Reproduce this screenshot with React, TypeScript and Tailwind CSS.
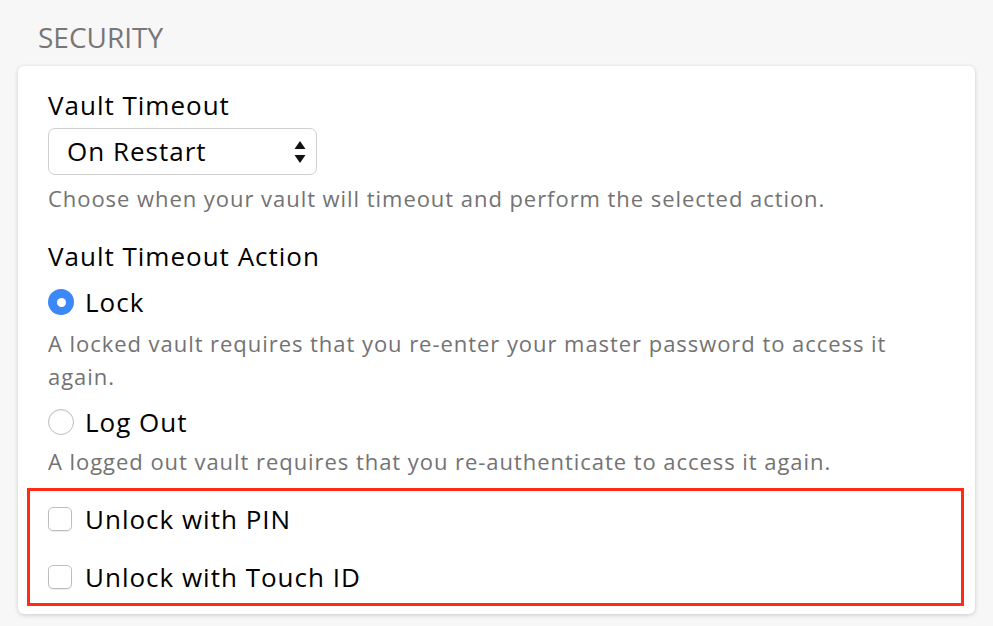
const Radio = ({ checked }: { checked: boolean }) =>
  checked ? (
    <span className="flex h-[26px] w-[26px] shrink-0 items-center justify-center rounded-full bg-[#3b88f6]">
      <span className="h-[9px] w-[9px] rounded-full bg-white" />
    </span>
  ) : (
    <span className="h-[26px] w-[26px] shrink-0 rounded-full border border-[#bdbdbd] bg-white shadow-[inset_0_1px_1px_rgba(0,0,0,0.06)]" />
  );

const Checkbox = () => (
  <span className="h-[24px] w-[24px] shrink-0 rounded-[5px] border border-[#bdbdbd] bg-white shadow-[0_1px_1px_rgba(0,0,0,0.08)]" />
);

const App = () => {
  return (
    <div
      className="min-h-[626px] bg-[#f7f7f7] pt-[19px]"
      style={{ fontFamily: '"Open Sans", "Liberation Sans", sans-serif' }}
    >
      <h2 className="ml-[38px] text-[28px] leading-[36px] text-[#777777]">SECURITY</h2>

      <div className="mx-[18px] mt-[11px] rounded-[6px] bg-white px-[30px] pt-[22px] pb-[8px] shadow-[0_1px_4px_rgba(0,0,0,0.18)]">
        <label className="block text-[26px] leading-[34px] tracking-[1px] text-black">Vault Timeout</label>
        <div className="mt-[6px] flex h-[47px] w-[269px] items-center justify-between rounded-[7px] border-[1.5px] border-[#cfcfcf] pl-[18px] pr-[10px] text-[26px] tracking-[1px] text-black">
          <span>On Restart</span>
          <svg width="12" height="28" viewBox="0 0 12 28">
            <path d="M6 3 L11.5 11 L0.5 11 Z" fill="#111" />
            <path d="M0.5 17 L11.5 17 L6 25 Z" fill="#111" />
          </svg>
        </div>
        <p className="mt-[7px] text-[22px] leading-[33px] tracking-[0.95px] text-[#737373]">
          Choose when your vault will timeout and perform the selected action.
        </p>

        <div className="mt-[24px] text-[26px] leading-[34px] tracking-[1px] text-black">Vault Timeout Action</div>

        <div className="mt-[12px] flex items-center gap-[11px] text-[26px] leading-[34px] tracking-[1px] text-black">
          <Radio checked />
          <span>Lock</span>
        </div>
        <p className="mt-[8px] text-[22px] leading-[33px] tracking-[0.95px] text-[#737373]">
          A locked vault requires that you re-enter your master password to access it again.
        </p>

        <div className="mt-[12px] flex items-center gap-[11px] text-[26px] leading-[34px] tracking-[1px] text-black">
          <Radio checked={false} />
          <span>Log Out</span>
        </div>
        <p className="mt-[6px] text-[22px] leading-[33px] tracking-[0.95px] text-[#737373]">
          A logged out vault requires that you re-authenticate to access it again.
        </p>

        <div className="-ml-[21px] -mr-[19px] mt-[10px] border-[3px] border-[#ff2b14] pl-[18px] pt-[11px] pb-[9px]">
          <div className="flex items-center gap-[13px] text-[26px] leading-[34px] tracking-[1px] text-black">
            <Checkbox />
            <span>Unlock with PIN</span>
          </div>
          <div className="mt-[24px] flex items-center gap-[13px] text-[26px] leading-[34px] tracking-[1px] text-black">
            <Checkbox />
            <span>Unlock with Touch ID</span>
          </div>
        </div>
      </div>
    </div>
  );
};

export default App;
